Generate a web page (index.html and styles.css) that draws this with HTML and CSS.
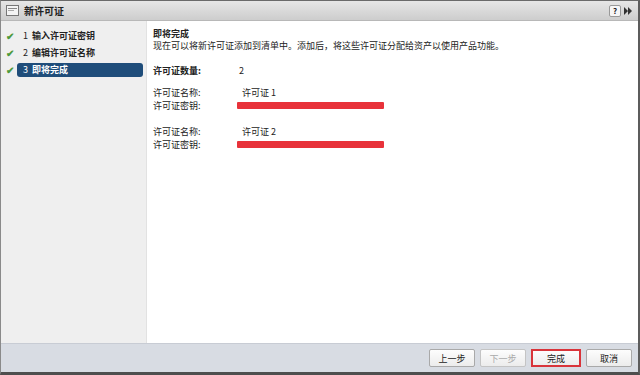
FILE: index.html
```html
<!DOCTYPE html>
<html lang="zh-CN">
<head>
    <meta charset="UTF-8">
    <title>新许可证</title>
    <link rel="stylesheet" href="styles.css">
</head>
<body>
    <div class="dialog">
        <!-- 标题栏 -->
        <div class="titlebar">
            <svg class="win-icon" width="13" height="11" viewBox="0 0 13 11">
                <rect x="0.5" y="0.5" width="12" height="10" fill="#f4f4f4" stroke="#777"/>
                <rect x="2" y="3" width="9" height="1" fill="#888"/>
                <rect x="2" y="5" width="6" height="1" fill="#aaa"/>
            </svg>
            <span class="title">新许可证</span>
            <span class="tools">
                <span class="help">?</span>
                <svg width="9" height="8" viewBox="0 0 9 8"><path d="M0 0 L4 4 L0 8Z M4 0 L8 4 L4 8Z" fill="#333"/></svg>
            </span>
        </div>
        <div class="main">
            <!-- 左侧步骤 -->
            <ul class="steps">
                <li><span class="check">&#10004;</span><span class="label"><span class="num">1</span>输入许可证密钥</span></li>
                <li><span class="check">&#10004;</span><span class="label"><span class="num">2</span>编辑许可证名称</span></li>
                <li class="current"><span class="check">&#10004;</span><span class="label"><span class="num">3</span>即将完成</span></li>
            </ul>
            <!-- 右侧内容 -->
            <div class="content">
                <h3>即将完成</h3>
                <p class="desc">现在可以将新许可证添加到清单中。添加后，将这些许可证分配给资产以使用产品功能。</p>
                <div class="row count"><span class="key">许可证数量:</span><span>2</span></div>
                <div class="group">
                    <div class="row"><span class="key">许可证名称:</span><span class="val">许可证 1</span></div>
                    <div class="row"><span class="key">许可证密钥:</span><span class="bar"></span></div>
                </div>
                <div class="group">
                    <div class="row"><span class="key">许可证名称:</span><span class="val">许可证 2</span></div>
                    <div class="row"><span class="key">许可证密钥:</span><span class="bar"></span></div>
                </div>
            </div>
        </div>
        <!-- 底部按钮 -->
        <div class="footer">
            <button class="btn">上一步</button>
            <button class="btn" disabled>下一步</button>
            <button class="btn finish">完成</button>
            <button class="btn">取消</button>
        </div>
    </div>
</body>
</html>
```

FILE: styles.css
```css
body{
    margin: 0;
    font-family: "Noto Sans CJK SC", "Liberation Sans", sans-serif;
    font-size: 9px;
    color: #222;
}
.dialog{
    width: 640px;
    height: 375px;
    box-sizing: border-box;
    border-top: 1px solid #6a6a6a;
    border-left: 1px solid #8a8a8a;
    border-right: 2px solid #5c5c5c;
    border-bottom: 3px solid #4e4e4e;
    display: flex;
    flex-direction: column;
    background: #fff;
}
/* 标题栏 */
.titlebar{
    height: 19px;
    display: flex;
    align-items: center;
    padding-left: 5px;
    background: linear-gradient(#e6e6e6, #cdcdcd);
    border-bottom: 1px solid #b8b8b8;
}
.win-icon{
    margin-right: 5px;
}
.title{
    font-weight: bold;
    font-size: 10px;
}
.tools{
    margin-left: auto;
    margin-right: 5px;
    display: flex;
    align-items: center;
    gap: 3px;
}
.help{
    width: 10px;
    height: 10px;
    line-height: 10px;
    text-align: center;
    font-size: 8px;
    font-weight: bold;
    background: #f6f6f6;
    border: 1px solid #999;
    border-radius: 2px;
}
.main{
    flex: 1;
    display: flex;
}
/* 左侧步骤 */
.steps{
    width: 146px;
    margin: 0;
    padding: 7px 0 0 5px;
    box-sizing: border-box;
    list-style: none;
    background: #efefef;
    border-right: 1px solid #e2e2e2;
}
.steps li{
    display: flex;
    align-items: center;
    height: 15px;
    margin-bottom: 2px;
    font-weight: bold;
    font-size: 9px;
}
.check{
    color: #4e9a3c;
    font-size: 10px;
    width: 11px;
}
.num{
    margin-right: 4px;
    font-weight: normal;
}
.steps .label{
    flex: 1;
    margin-right: 3px;
    padding-left: 6px;
    height: 14px;
    line-height: 14px;
    border-radius: 3px;
}
.steps .current .label{
    background: #1f4d7a;
    color: #fff;
}
/* 右侧内容 */
.content{
    flex: 1;
    padding: 7px 0 0 6px;
}
.content h3{
    margin: 0;
    font-size: 9px;
    line-height: 12px;
}
.desc{
    margin: 0 0 12px;
    line-height: 12px;
}
.row{
    display: flex;
    align-items: center;
    height: 13px;
}
.key{
    width: 86px;
}
.count{
    margin-bottom: 9px;
}
.count .key{
    font-weight: bold;
}
.val{
    padding-left: 3px;
}
.group{
    margin-bottom: 13px;
}
.bar{
    width: 147px;
    height: 7px;
    margin-left: -2px;
    background: #e8323a;
    border-radius: 1px;
}
/* 底部按钮 */
.footer{
    height: 28px;
    display: flex;
    align-items: center;
    justify-content: flex-end;
    gap: 5px;
    padding-right: 6px;
    background: #d8dce3;
    border-top: 1px solid #c8ccd4;
}
.btn{
    width: 46px;
    height: 18px;
    padding: 0;
    font-family: inherit;
    font-size: 9px;
    color: #222;
    background: linear-gradient(#fdfdfd, #ececec);
    border: 1px solid #a9a9a9;
    border-radius: 2px;
}
.btn:disabled{
    color: #aaa;
    border-color: #c4c4c4;
}
.finish{
    width: 50px;
    border: 2px solid #d9343a;
    border-radius: 0;
}
```
